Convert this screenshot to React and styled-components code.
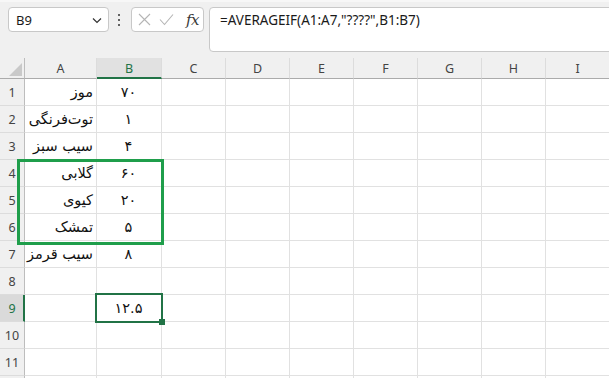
import React from "react";
import styled, { createGlobalStyle } from "styled-components";

const Global = createGlobalStyle`
  html, body { margin: 0; padding: 0; background: #ffffff; overflow: hidden; }
  body { font-family: "Noto Sans", "Open Sans", sans-serif; }
  * { box-sizing: border-box; }
`;

const Page = styled.div`
  position: relative;
  width: 609px;
  height: 378px;
  overflow: hidden;
  background: #ffffff;
`;

const Toolbar = styled.div`
  display: flex;
  align-items: flex-start;
  height: 58px;
  padding: 5px 0 0 8px;
  background: #f0f0f0;
  border-top: 2px solid #f7f7f7;
`;

const NameBox = styled.div`
  display: flex;
  align-items: center;
  justify-content: space-between;
  width: 101px;
  height: 25px;
  padding: 0 5px 0 7px;
  background: #ffffff;
  border: 1px solid #c8c8c8;
  border-radius: 4px;
  font-family: "Noto Sans", sans-serif;
  font-size: 13px;
  color: #1a1a1a;
`;

const Dots = styled.div`
  display: flex;
  flex-direction: column;
  align-items: center;
  justify-content: center;
  gap: 3px;
  width: 20px;
  height: 25px;
  margin-right: 2px;
`;

const Dot = styled.span`
  width: 2px;
  height: 2px;
  border-radius: 1px;
  background: #333;
`;

const FxBox = styled.div`
  display: flex;
  align-items: center;
  width: 73px;
  height: 25px;
  padding: 0 0 0 6px;
  gap: 8px;
  background: #ffffff;
  border: 1px solid #c8c8c8;
  border-radius: 4px;
`;

const FxText = styled.span`
  font-family: "DejaVu Serif", "Liberation Serif", serif;
  font-style: italic;
  font-size: 15px;
  color: #3a3a3a;
  margin-left: 4px;
  letter-spacing: -0.5px;
`;

const FormulaBox = styled.div`
  flex: 1;
  height: 45px;
  margin-left: 5px;
  margin-right: -10px;
  padding: 3px 0 0 10px;
  background: #ffffff;
  border: 1px solid #c8c8c8;
  border-radius: 4px;
  font-family: "Noto Sans", sans-serif;
  font-size: 13.5px;
  line-height: 18px;
  color: #1a1a1a;
`;

const Sheet = styled.div`
  display: grid;
  grid-template-columns: 25px 72px 65px repeat(7, 64px);
  grid-template-rows: 21px repeat(12, 27px);
`;

const Corner = styled.div`
  background: #f0f0f0;
  border-right: 1px solid #bdbdbd;
  border-bottom: 1px solid #ababab;
  display: flex;
  align-items: flex-end;
  justify-content: flex-end;
  padding: 0 2px 2px 0;
`;

const ColHead = styled.div`
  display: flex;
  align-items: center;
  justify-content: center;
  background: ${(p) => (p.$active ? "#e1e1e1" : "#f0f0f0")};
  border-right: 1px solid #dcdcdc;
  border-bottom: ${(p) => (p.$active ? "2px solid #217346" : "1px solid #ababab")};
  font-family: "Noto Sans", sans-serif;
  font-size: 12.5px;
  color: ${(p) => (p.$active ? "#217346" : "#444444")};
  padding-top: ${(p) => (p.$active ? "1px" : "0")};
`;

const RowHead = styled.div`
  display: flex;
  align-items: center;
  justify-content: center;
  background: ${(p) => (p.$active ? "#dadada" : "#f0f0f0")};
  border-right: ${(p) => (p.$active ? "2px solid #217346" : "1px solid #bdbdbd")};
  border-bottom: 1px solid #dcdcdc;
  font-family: "Noto Sans", sans-serif;
  font-size: 12.5px;
  color: ${(p) => (p.$active ? "#217346" : "#444444")};
  padding-left: ${(p) => (p.$active ? "1px" : "0")};
`;

const Cell = styled.div`
  position: relative;
  display: flex;
  align-items: center;
  justify-content: ${(p) => (p.$align === "center" ? "center" : "flex-end")};
  padding: 0 3px 1px 2px;
  border-right: 1px solid #e1e1e1;
  border-bottom: 1px solid #e1e1e1;
  font-family: "DejaVu Sans", sans-serif;
  font-size: 14.5px;
  color: #111111;
  white-space: nowrap;
  z-index: ${(p) => (p.$selected ? 2 : "auto")};
`;

const Selection = styled.div`
  position: absolute;
  left: -2px;
  top: -2px;
  right: -2px;
  bottom: -2px;
  border: 2px solid #217346;
  pointer-events: none;
`;

const Handle = styled.div`
  position: absolute;
  right: -4px;
  bottom: -4px;
  width: 6px;
  height: 6px;
  background: #217346;
`;

const Annotation = styled.div`
  position: absolute;
  left: 17px;
  top: 159px;
  width: 147px;
  height: 86px;
  border: 3px solid #1f9e4b;
  pointer-events: none;
  z-index: 3;
`;

const cols = ["A", "B", "C", "D", "E", "F", "G", "H", "I"];
const colA = ["موز", "توت‌فرنگی", "سیب سبز", "گلابی", "کیوی", "تمشک", "سیب قرمز"];
const colB = ["۷۰", "۱", "۴", "۶۰", "۲۰", "۵", "۸"];

const Chevron = () => (
  <svg width="12" height="12" viewBox="0 0 12 12">
    <path d="M2 4.5 L6 8.5 L10 4.5" fill="none" stroke="#333" strokeWidth="1.2" />
  </svg>
);

const CrossIcon = () => (
  <svg width="13" height="13" viewBox="0 0 13 13">
    <path d="M1 1 L12 12 M12 1 L1 12" stroke="#b5b5b5" strokeWidth="1.1" fill="none" />
  </svg>
);

const CheckIcon = () => (
  <svg width="15" height="13" viewBox="0 0 15 13">
    <path d="M1 6.5 L5.5 11.5 L14 1.5" stroke="#b5b5b5" strokeWidth="1.1" fill="none" />
  </svg>
);

const CornerTriangle = () => (
  <svg width="13" height="13" viewBox="0 0 13 13">
    <polygon points="13,0 13,13 0,13" fill="#c9c9c9" />
  </svg>
);

export default function App() {
  const rows = [];
  for (let r = 1; r <= 12; r++) {
    rows.push(
      <React.Fragment key={r}>
        <RowHead $active={r === 9}>{r <= 11 ? r : ""}</RowHead>
        {cols.map((c) => {
          let content = null;
          let align = "right";
          if (c === "A" && r <= 7) content = colA[r - 1];
          if (c === "B" && r <= 7) {
            content = colB[r - 1];
            align = "center";
          }
          if (c === "B" && r === 9) {
            return (
              <Cell key={c} $align="center" $selected>
                ۱۲.۵
                <Selection>
                  <Handle />
                </Selection>
              </Cell>
            );
          }
          return (
            <Cell key={c} $align={align}>
              {content}
            </Cell>
          );
        })}
      </React.Fragment>
    );
  }

  return (
    <Page>
      <Global />
      <Toolbar>
        <NameBox>
          <span>B9</span>
          <Chevron />
        </NameBox>
        <Dots>
          <Dot />
          <Dot />
          <Dot />
        </Dots>
        <FxBox>
          <CrossIcon />
          <CheckIcon />
          <FxText>fx</FxText>
        </FxBox>
        <FormulaBox>=AVERAGEIF(A1:A7,"????",B1:B7)</FormulaBox>
      </Toolbar>
      <Sheet>
        <Corner>
          <CornerTriangle />
        </Corner>
        {cols.map((c) => (
          <ColHead key={c} $active={c === "B"}>
            {c}
          </ColHead>
        ))}
        {rows}
      </Sheet>
      <Annotation />
    </Page>
  );
}
